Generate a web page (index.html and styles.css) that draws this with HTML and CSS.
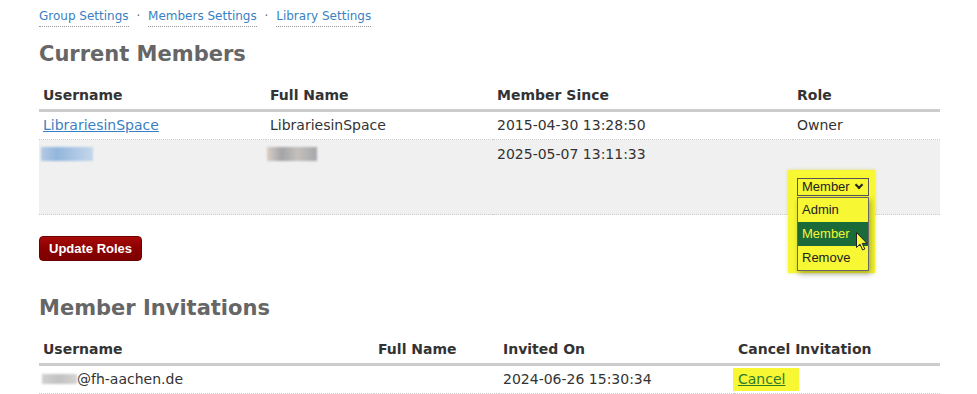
FILE: index.html
```html
<!DOCTYPE html>
<html lang="en">
<head>
  <meta charset="UTF-8">
  <title>Members Settings</title>
  <link rel="stylesheet" href="styles.css">
</head>
<body>
  <div class="page">
    <nav class="subnav">
      <a href="#">Group Settings</a>
      <span class="sep">·</span>
      <a href="#">Members Settings</a>
      <span class="sep">·</span>
      <a href="#">Library Settings</a>
    </nav>

    <h2>Current Members</h2>

    <table class="members">
      <thead>
        <tr>
          <th class="c-user">Username</th>
          <th class="c-name">Full Name</th>
          <th class="c-since">Member Since</th>
          <th class="c-role">Role</th>
        </tr>
      </thead>
      <tbody>
        <tr>
          <td><a href="#">LibrariesinSpace</a></td>
          <td>LibrariesinSpace</td>
          <td>2015-04-30 13:28:50</td>
          <td>Owner</td>
        </tr>
        <tr class="alt">
          <td><span class="blur blur-user"></span></td>
          <td><span class="blur blur-name"></span></td>
          <td>2025-05-07 13:11:33</td>
          <td class="role-cell">
            <div class="picker">
              <div class="mark"></div>
              <div class="select-box">Member <span class="chev"></span></div>
              <ul class="select-list">
                <li>Admin</li>
                <li class="active">Member</li>
                <li>Remove</li>
              </ul>
              <svg class="cursor" width="12" height="19" viewBox="0 0 12 19">
                <path d="M0.5 0.5 L0.5 15.5 L4 12.2 L6.6 18 L8.8 17 L6.3 11.4 L11 11.4 Z" fill="#f8f83a" stroke="#222" stroke-width="1"/>
              </svg>
            </div>
          </td>
        </tr>
      </tbody>
    </table>

    <button class="btn-update">Update Roles</button>

    <h2>Member Invitations</h2>

    <table class="invites">
      <thead>
        <tr>
          <th class="i-user">Username</th>
          <th class="i-name">Full Name</th>
          <th class="i-on">Invited On</th>
          <th class="i-cancel">Cancel Invitation</th>
        </tr>
      </thead>
      <tbody>
        <tr>
          <td><span class="blur blur-mail"></span>@fh-aachen.de</td>
          <td></td>
          <td>2024-06-26 15:30:34</td>
          <td><span class="hl"><a href="#" class="cancel">Cancel</a></span></td>
        </tr>
      </tbody>
    </table>
  </div>
</body>
</html>
```

FILE: styles.css
```css
body {
  margin: 0;
  font-family: "DejaVu Sans", Verdana, sans-serif;
  color: #333;
  background: #fff;
}
.page {
  width: 901px;
  padding: 8px 0 0 39px;
}
a {
  color: #3a7fc3;
}
.subnav {
  font-size: 12px;
  line-height: 16px;
  color: #666;
}
.subnav a {
  display: inline-block;
  text-decoration: none;
  padding-bottom: 2px;
  border-bottom: 1px dotted #999;
}
.subnav .sep {
  margin: 0 4px;
}
h2 {
  font-size: 21px;
  line-height: 26px;
  color: #666;
  margin: 14px 0 16px;
}
table {
  width: 901px;
  border-collapse: collapse;
  table-layout: fixed;
  font-size: 14px;
  line-height: 17px;
}
th {
  text-align: left;
  font-weight: bold;
  padding: 4px 4px 5px;
  border-bottom: 3px solid #ccc;
}
td {
  padding: 5px 4px;
  vertical-align: top;
  border-bottom: 1px dotted #ccc;
}
.c-user, .c-name { width: 219px; }
.c-since { width: 292px; }
.i-user { width: 327px; }
.i-name { width: 117px; }
.i-on { width: 227px; }
tr.alt td {
  background: #f0f0f0;
  padding-top: 6px;
}
.blur {
  display: inline-block;
  height: 14px;
  vertical-align: -2px;
  filter: blur(1px);
}
.blur-user {
  width: 52px;
  margin-left: -2px;
  background: linear-gradient(90deg, #b4cbe4, #92b6dc 30%, #a8c4e3 60%, #c4d7ea);
}
.blur-name {
  width: 50px;
  margin-left: -3px;
  background: linear-gradient(90deg, #d8cfc5, #a3a4a8 30%, #c4c0bb 60%, #a6a7ad);
}
.blur-mail {
  width: 35px;
  height: 10px;
  margin-left: -1px;
  vertical-align: 0;
  background: linear-gradient(90deg, #d0d0d0, #c2c2c2 50%, #d4d4d4);
}
tr.alt td.role-cell {
  padding: 38px 4px 18px;
}
.picker {
  position: relative;
  z-index: 1;
  width: 72px;
}
.mark {
  position: absolute;
  left: -9px;
  top: -8px;
  right: -6px;
  bottom: -77px;
  background: #f7f733;
  box-shadow: 0 0 3px rgba(200, 200, 0, 0.5);
  z-index: -1;
}
.select-box {
  box-sizing: border-box;
  height: 18px;
  border: 1px solid #555;
  font-family: "Liberation Sans", Arial, sans-serif;
  font-size: 13px;
  line-height: 16px;
  padding-left: 4px;
  color: #222;
}
.chev {
  display: inline-block;
  width: 4px;
  height: 4px;
  border-right: 2px solid #222;
  border-bottom: 2px solid #222;
  transform: rotate(45deg);
  margin-left: 3px;
  vertical-align: 3px;
}
.select-list {
  position: absolute;
  left: 0;
  top: 19px;
  width: 72px;
  box-sizing: border-box;
  margin: 0;
  padding: 0;
  list-style: none;
  border: 1px solid #666;
  box-shadow: 2px 3px 6px rgba(0, 0, 0, 0.3);
  font-family: "Liberation Sans", Arial, sans-serif;
  font-size: 13px;
  line-height: 24px;
  color: #222;
}
.select-list li {
  padding-left: 4px;
}
.select-list li.active {
  background: #1b6a39;
  color: #f5f535;
}
.cursor {
  position: absolute;
  left: 59px;
  top: 54px;
}
.btn-update {
  display: block;
  margin-top: 21px;
  height: 25px;
  padding: 0 9px;
  border: 1px solid #6e0000;
  border-radius: 4px;
  background: linear-gradient(#a80a0a, #8b0000 50%, #7e0000);
  color: #fff;
  font-family: "Liberation Sans", Arial, sans-serif;
  font-size: 13px;
  font-weight: bold;
}
.btn-update + h2 {
  margin-top: 34px;
}
.invites td {
  vertical-align: middle;
  height: 17px;
}
.hl {
  display: inline-block;
  background: #f7f733;
  margin: -3px 0 -3px -5px;
  padding: 3px 14px 3px 5px;
}
.cancel {
  color: #2e7a2a;
}
```
